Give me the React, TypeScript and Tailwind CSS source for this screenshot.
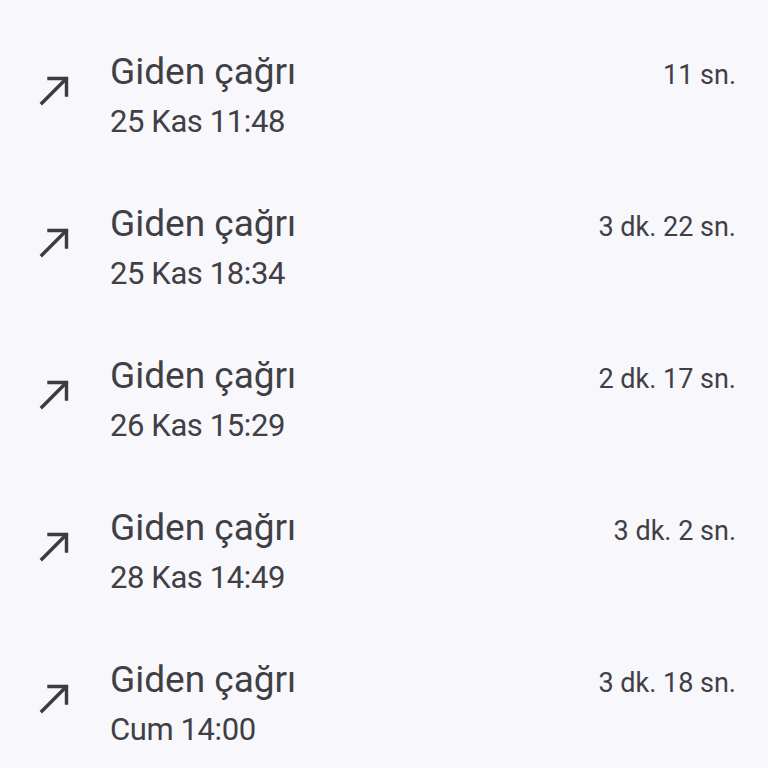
import React from 'react';

type Call = { date: string; duration: string };

const calls: Call[] = [
  { date: '25 Kas 11:48', duration: '11 sn.' },
  { date: '25 Kas 18:34', duration: '3 dk. 22 sn.' },
  { date: '26 Kas 15:29', duration: '2 dk. 17 sn.' },
  { date: '28 Kas 14:49', duration: '3 dk. 2 sn.' },
  { date: 'Cum 14:00', duration: '3 dk. 18 sn.' },
];

const OutgoingArrow: React.FC = () => (
  <svg width="34" height="34" viewBox="0 0 34 34" fill="none" stroke="#3b3b40" strokeWidth="3.4" strokeLinecap="square">
    <path d="M5 30 L29 6" />
    <path d="M12 5.5 H29.5 V22" />
  </svg>
);

const App: React.FC = () => {
  return (
    <div
      className="w-[768px] h-[768px] overflow-hidden bg-[#f8f7fc] text-[#3f3f45] pt-[21px]"
      style={{ fontFamily: 'Roboto, "Noto Sans", sans-serif' }}
    >
      {calls.map((call, i) => (
        <div key={i} className="h-[152px] flex items-center pl-[37px] pr-[32px]">
          <div className="w-[73px] -mt-[14px]">
            <OutgoingArrow />
          </div>
          <div className="flex-1">
            <div className="flex items-baseline justify-between">
              <span className="text-[37px] leading-[48px]">Giden çağrı</span>
              <span className="text-[27px]">{call.duration}</span>
            </div>
            <div className="text-[31px] leading-[48px] mt-[2px] tracking-[-0.4px]">{call.date}</div>
          </div>
        </div>
      ))}
    </div>
  );
};

export default App;
